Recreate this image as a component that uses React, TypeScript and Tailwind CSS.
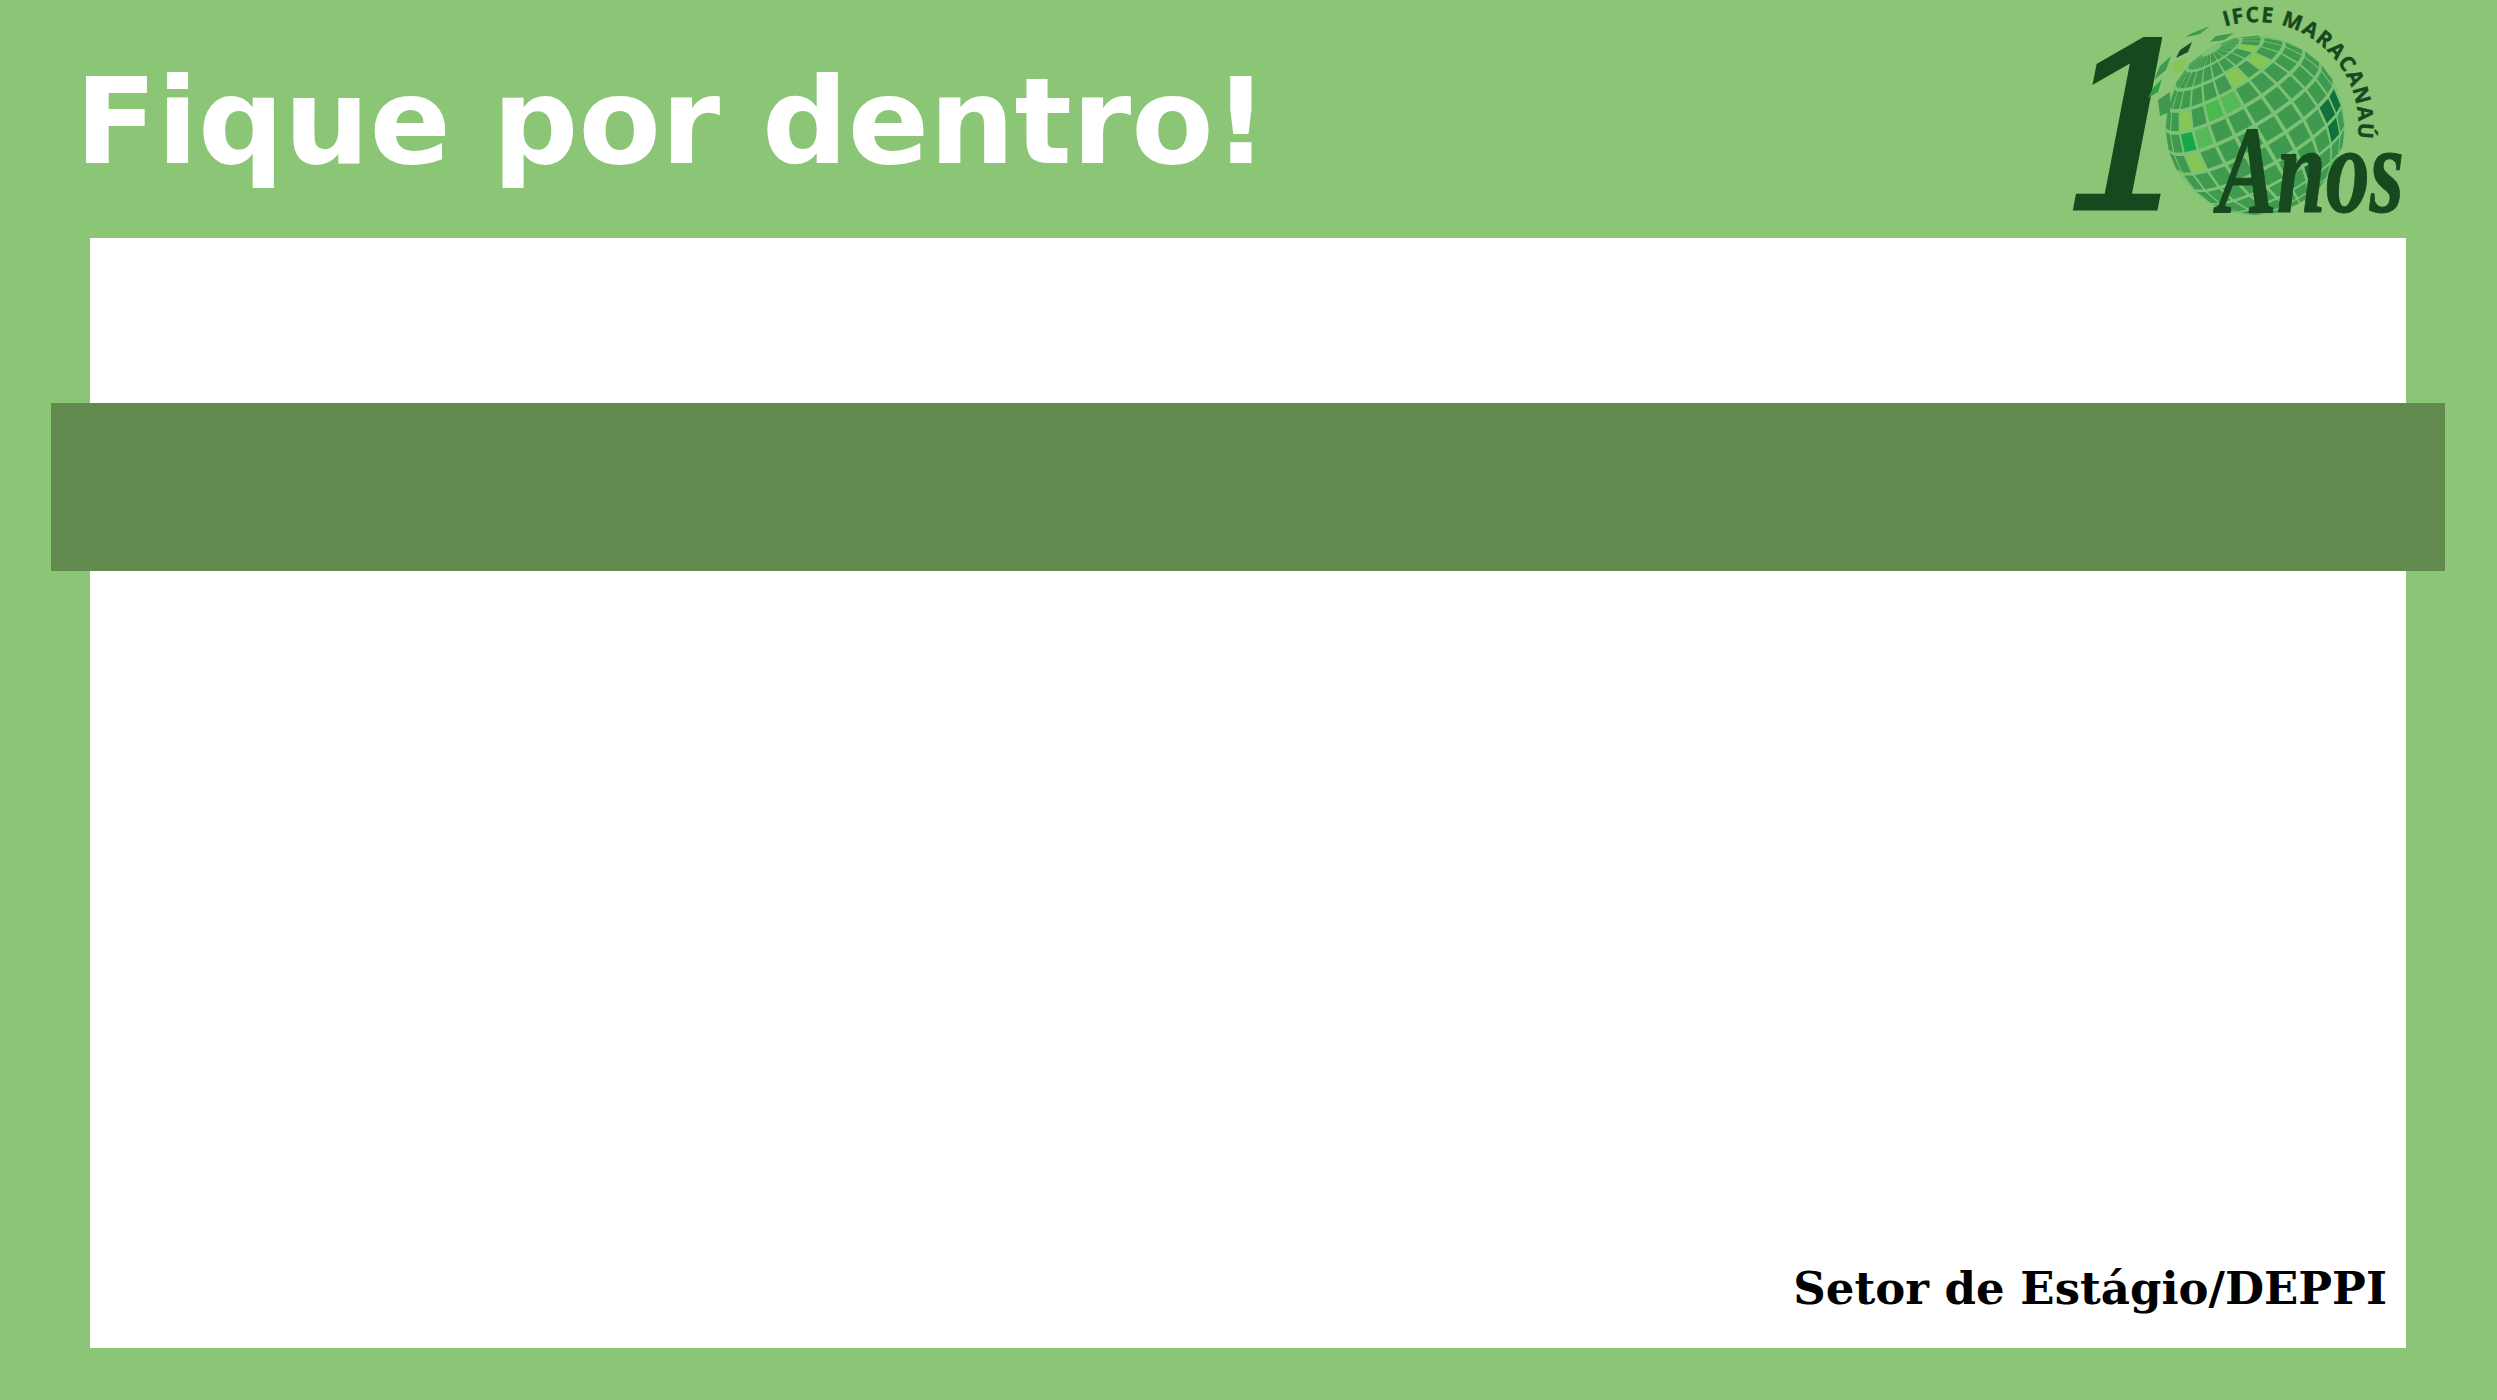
import React from 'react';

type Tile = { points: string; cx: number; cy: number };

const GLOBE = { x: 215, y: 125.5, r: 90 };
const TILT = (14 * Math.PI) / 180;
const ROLL = (-30 * Math.PI) / 180;

const project = (lat: number, lon: number) => {
  const t = (lat * Math.PI) / 180;
  const p = (lon * Math.PI) / 180;
  const x = Math.sin(t) * Math.sin(p);
  const y = Math.cos(t);
  const z = Math.sin(t) * Math.cos(p);
  const up = y * Math.cos(TILT) - z * Math.sin(TILT);
  return {
    x: GLOBE.x + GLOBE.r * (x * Math.cos(ROLL) + up * Math.sin(ROLL)),
    y: GLOBE.y - GLOBE.r * (up * Math.cos(ROLL) - x * Math.sin(ROLL)),
    z: y * Math.sin(TILT) + z * Math.cos(TILT),
  };
};

const buildTiles = (): Tile[] => {
  const tiles: Tile[] = [];
  for (let lat = 6; lat < 180; lat += 14) {
    for (let lon = -180; lon < 180; lon += 15) {
      const corners = [
        project(lat + 1.2, lon + 1.2),
        project(lat + 1.2, lon + 13.8),
        project(lat + 12.8, lon + 13.8),
        project(lat + 12.8, lon + 1.2),
      ];
      if (corners.some((c) => c.z < 0.02)) continue;
      tiles.push({
        points: corners.map((c) => `${c.x.toFixed(1)},${c.y.toFixed(1)}`).join(' '),
        cx: corners.reduce((s, c) => s + c.x, 0) / 4,
        cy: corners.reduce((s, c) => s + c.y, 0) / 4,
      });
    }
  }
  return tiles;
};

const accents = [
  { x: 228, y: 107, fill: '#86c652' },
  { x: 148, y: 113, fill: '#86c652' },
  { x: 158, y: 155, fill: '#86c652' },
  { x: 193, y: 70, fill: '#86c652' },
  { x: 214, y: 53, fill: '#86c652' },
  { x: 165, y: 102, fill: '#55b95a' },
  { x: 188, y: 98, fill: '#55b95a' },
  { x: 177, y: 117, fill: '#4cb850' },
  { x: 167, y: 137, fill: '#55b95a' },
  { x: 145, y: 138, fill: '#14a84a' },
  { x: 295, y: 107, fill: '#11713d' },
  { x: 295, y: 130, fill: '#11713d' },
  { x: 273, y: 163, fill: '#11623a' },
];

const tileFill = (tile: Tile) => {
  let best = '#3f9a4f';
  let dist = 9;
  for (const a of accents) {
    const d = Math.hypot(a.x - tile.cx, a.y - tile.cy);
    if (d < dist) {
      dist = d;
      best = a.fill;
    }
  }
  return best;
};

const shards = [
  { points: '150,34 170,26 160,34 146,37', fill: '#3f9a4f' },
  { points: '140,50 152,42 148,52 136,58', fill: '#1a4d24' },
  { points: '120,66 131,56 126,70 114,80', fill: '#3f9a4f' },
  { points: '113,88 122,79 118,92 108,98', fill: '#2f9f49' },
  { points: '176,36 194,33 184,40 170,42', fill: '#3f9a4f' },
  { points: '134,62 146,58 142,72 132,74', fill: '#86c652' },
  { points: '118,100 130,92 130,112 120,116', fill: '#3f9a4f' },
];

const Logo = () => {
  const tiles = buildTiles();
  return (
    <svg viewBox="0 0 400 238" className="w-[400px] h-[238px] shrink-0">
      <text
        x="20"
        y="208"
        fill="#17491f"
        stroke="#17491f"
        strokeWidth="5"
        fontFamily="'DejaVu Serif', serif"
        fontStyle="italic"
        fontSize="226"
      >
        1
      </text>
      <circle cx={GLOBE.x} cy={GLOBE.y} r={GLOBE.r} fill="#7cc274" />
      {tiles.map((tile, i) => (
        <polygon key={i} points={tile.points} fill={tileFill(tile)} />
      ))}
      {shards.map((s, i) => (
        <polygon key={i} points={s.points} fill={s.fill} />
      ))}
      <path id="logo-arc" d="M185 26.5 A103 103 0 0 1 317 142" fill="none" />
      <text
        fill="#17491f"
        stroke="#17491f"
        strokeWidth="0.4"
        fontFamily="'Open Sans', sans-serif"
        fontWeight="700"
        fontSize="21"
      >
        <textPath href="#logo-arc" textLength="206" lengthAdjust="spacing">
          IFCE MARACANAÚ
        </textPath>
      </text>
      <text
        x="178"
        y="212"
        fill="#17491f"
        stroke="#17491f"
        strokeWidth="1"
        fontFamily="'Liberation Serif', serif"
        fontWeight="700"
        fontStyle="italic"
        fontSize="124"
        textLength="186"
        lengthAdjust="spacingAndGlyphs"
      >
        Anos
      </text>
    </svg>
  );
};

const App = () => {
  return (
    <div className="w-full h-[1400px] overflow-hidden bg-[#8bc576] flex flex-col">
      <header className="h-[238px] flex justify-between pl-[75px] pr-[57px]">
        <h1 className="mt-[52px] text-[120px] leading-[140px] font-bold text-white font-['DejaVu_Sans',sans-serif]">
          Fique por dentro!
        </h1>
        <Logo />
      </header>

      <main className="ml-[90px] mr-[91px] h-[1110px] bg-white flex flex-col">
        <div className="mt-[165px] -ml-[39px] -mr-[39px] h-[168px] bg-[#638b50]" />
        <p className="mt-auto mb-[33px] pr-[19px] text-right text-[45px] leading-[53px] font-bold text-black font-['DejaVu_Serif',serif]">
          Setor de Estágio/DEPPI
        </p>
      </main>
    </div>
  );
};

export default App;
